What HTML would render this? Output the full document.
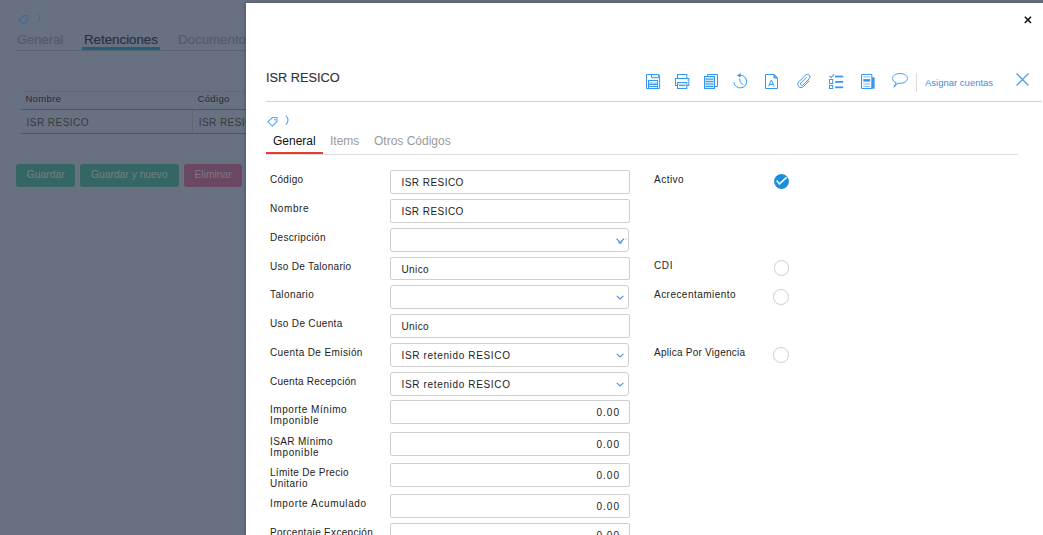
<!DOCTYPE html>
<html><head><meta charset="utf-8">
<style>
html,body{margin:0;padding:0;width:1043px;height:535px;overflow:hidden;background:#687182;font-family:"Liberation Sans",sans-serif;}
.t{position:absolute;white-space:nowrap;line-height:1;}
.bg{position:absolute;left:0;top:0;width:1043px;height:535px;background:#687182;}
#panel{position:absolute;left:246px;top:3px;width:797px;height:532px;background:#fff;box-shadow:0 0 4px rgba(40,48,62,0.55);}
.lbl{font-size:10px;color:#222;}
.inp{position:absolute;left:390px;width:238px;height:22px;border:1px solid #cfcfcf;border-radius:2px;background:#fff;}
.val{font-size:10px;color:#222;}
.rad{position:absolute;width:13.5px;height:13.5px;border:1px solid #cdcdcd;border-radius:50%;background:#fff;}
svg{position:absolute;overflow:visible;}
</style></head><body>
<div class="bg"></div>

<!-- background page (dimmed) -->
<svg style="left:18px;top:14px" width="12" height="11" viewBox="0 0 12 11"><path d="M0.9 5.9 L5.5 1.5 L9.9 1.5 L9.9 5.5 L5.3 10.2 Z" fill="none" stroke="#3f6a98" stroke-width="1.1" stroke-linejoin="round"/><rect x="7" y="2.9" width="1.6" height="1.6" fill="#3f6a98"/></svg>
<svg style="left:36.5px;top:12.8px" width="6" height="11" viewBox="0 0 6 11"><path d="M0.8 0.6 Q4.6 4.7 0.8 9.4" fill="none" stroke="#3f6a98" stroke-width="1"/></svg>
<div class="t" style="left:17px;top:33px;font-size:13px;color:#545b69;-webkit-text-stroke:0.2px #545b69">General</div>
<div class="t" style="left:84px;top:33px;font-size:13.3px;color:#2a303d;-webkit-text-stroke:0.2px #2a303d">Retenciones</div>
<div class="t" style="left:178px;top:33px;font-size:13.3px;color:#545b69;-webkit-text-stroke:0.2px #545b69">Documentos</div>
<div style="position:absolute;left:16px;top:50px;width:230px;height:1px;background:#5b6272"></div>
<div style="position:absolute;left:82px;top:47px;width:78px;height:3px;background:#245e78"></div>

<div style="position:absolute;left:21px;top:91px;width:225px;height:1px;background:#626a7a"></div>
<div class="t" style="left:25.4px;top:94.3px;font-size:9.5px;letter-spacing:0.35px;color:#272c38">Nombre</div>
<div class="t" style="left:197.5px;top:94.3px;font-size:9.5px;letter-spacing:0.35px;color:#272c38">Código</div>
<div style="position:absolute;left:21px;top:109px;width:225px;height:1px;background:#4d5565"></div>
<div class="t" style="left:26.6px;top:118.3px;font-size:10px;color:#333c3b;letter-spacing:0.45px">ISR RESICO</div>
<div class="t" style="left:198.7px;top:118.3px;font-size:10px;color:#333c3b;letter-spacing:0.45px">ISR RESICO</div>
<div style="position:absolute;left:192px;top:110px;width:1px;height:23px;background:#5f6777"></div>
<div style="position:absolute;left:21px;top:133px;width:225px;height:1px;background:#4d5565"></div>

<div style="position:absolute;left:16px;top:164px;width:59px;height:23px;background:#336664;border-radius:3px"></div>
<div class="t" style="left:26.8px;top:169.8px;font-size:10.3px;color:#748088">Guardar</div>
<div style="position:absolute;left:80px;top:164px;width:99px;height:23px;background:#336664;border-radius:3px"></div>
<div class="t" style="left:91px;top:169.8px;font-size:10.3px;color:#748088">Guardar y nuevo</div>
<div style="position:absolute;left:184px;top:164px;width:58px;height:23px;background:#6a4862;border-radius:3px"></div>
<div class="t" style="left:194.5px;top:169.8px;font-size:10.3px;color:#7d7588">Eliminar</div>

<!-- panel -->
<div id="panel"></div>

<!-- top close -->
<svg style="left:1024px;top:16px" width="8" height="8" viewBox="0 0 8 8"><path d="M0.8 0.8 L7 7 M7 0.8 L0.8 7" stroke="#111" stroke-width="1.55"/></svg>

<!-- title -->
<div class="t" style="left:266px;top:72.4px;font-size:12.75px;color:#2f333b;-webkit-text-stroke:0.15px #2f333b">ISR RESICO</div>
<div style="position:absolute;left:266px;top:101px;width:776px;height:1px;background:#cfd1d6"></div>

<!-- toolbar icons -->
<div id="icons">
<svg style="left:646px;top:74px" width="15" height="15" viewBox="0 0 15 15" fill="none" stroke="#3597f2" stroke-width="1">
<path d="M0.5 0.5 H12.6 L13.6 1.5 V14.5 H0.5 Z"/>
<path d="M5.5 0.5 V3.7 H12.5 V0.5"/>
<rect x="7" y="1.3" width="3.6" height="1.6" fill="#cfe6fb" stroke="none"/>
<rect x="2.5" y="6.5" width="9.1" height="8" fill="#fff"/>
<rect x="3" y="8.2" width="8.1" height="2.2" fill="#a9d2f8" stroke="none"/>
<path d="M3 10.5 H11 M3 12.5 H11"/>
</svg>
<svg style="left:675px;top:74px" width="15" height="15" viewBox="0 0 15 15" fill="none" stroke="#3597f2" stroke-width="1">
<rect x="2.5" y="0.5" width="9.3" height="4"/>
<rect x="0.5" y="4.5" width="13.3" height="7" fill="#fff"/>
<rect x="2.5" y="8.5" width="9.3" height="6" fill="#fff"/>
<rect x="3" y="9.6" width="8.3" height="1.6" fill="#b9dafa" stroke="none"/>
<path d="M4 11.6 H10.5"/>
<rect x="12" y="5.6" width="1" height="1" fill="#b9dafa" stroke="none"/>
</svg>
<svg style="left:704px;top:74px" width="15" height="15" viewBox="0 0 15 15" fill="none" stroke="#3597f2" stroke-width="1">
<path d="M3.5 2.5 V0.5 H13.5 V12.5 H10.5"/>
<rect x="0.5" y="2.5" width="10" height="12" fill="#cfe6fb"/>
<path d="M1.5 5.2 H9.5 M1.5 7.6 H9.5 M1.5 10 H9.5 M1.5 12.5 H9.5" stroke="#3597f2"/>
</svg>
<svg style="left:733px;top:73px" width="15" height="16" viewBox="0 0 15 16" fill="none" stroke="#3597f2" stroke-width="1">
<path d="M7.3 2.1 A6.4 6.4 0 1 1 0.9 9.3"/>
<path d="M3.9 2.6 L7.6 0 L7.6 4.6 Z" fill="#3597f2" stroke="none"/>
<path d="M6.5 5.6 Q6.2 8.6 9.8 11.6"/>
</svg>
<svg style="left:765px;top:74px" width="14" height="15" viewBox="0 0 14 15" fill="none" stroke="#3597f2" stroke-width="1">
<path d="M0.5 0.5 H9.2 L12.5 3.8 V14.5 H0.5 Z"/>
<path d="M8.9 0.9 V4 H12.1 Z" fill="#7dbdf6" stroke-width="0.9"/>
<path d="M3.7 12.4 L6.4 5.9 L9.1 12.4 M4.6 10.4 H8.2"/>
</svg>
<svg style="left:797px;top:74px" width="15" height="15" viewBox="0 0 15 15" fill="none" stroke="#3597f2" stroke-width="1">
<path d="M12.3 6.6 L6.4 12.6 C5.1 13.9 3 13.9 1.7 12.6 C0.4 11.3 0.4 9.2 1.7 7.9 L8.5 1.1 C9.5 0.1 11.2 0.1 12.2 1.1 C13.2 2.1 13.2 3.8 12.2 4.8 L5.9 11.1 C5.3 11.7 4.4 11.7 3.8 11.1 C3.2 10.5 3.2 9.6 3.8 9 L9.3 3.5"/>
</svg>
<svg style="left:829px;top:74px" width="15" height="15" viewBox="0 0 15 15" fill="none" stroke="#3597f2" stroke-width="1">
<path d="M0.4 2.2 L2.1 3.6 L5.1 0.4" stroke-width="1.1"/>
<rect x="0.5" y="5.5" width="3.2" height="4"/>
<rect x="0.5" y="11.5" width="3.2" height="3"/>
<rect x="6.1" y="1.6" width="8.1" height="1.8" fill="#3597f2" stroke="none"/>
<rect x="6.1" y="7" width="8.1" height="1.8" fill="#3597f2" stroke="none"/>
<rect x="6.1" y="12.4" width="8.1" height="1.8" fill="#3597f2" stroke="none"/>
</svg>
<svg style="left:861px;top:74px" width="14" height="15" viewBox="0 0 14 15" fill="none" stroke="#3597f2" stroke-width="1.1">
<rect x="10.6" y="3.3" width="3" height="11.4" fill="#3597f2" stroke="none"/>
<rect x="0.55" y="0.55" width="10.3" height="13.9" rx="0.8" fill="#fff"/>
<rect x="2.3" y="2.3" width="6.8" height="1" fill="#7fbdf5" stroke="none"/>
<rect x="2.3" y="5.1" width="6.8" height="2.5" fill="#3597f2" stroke="none"/>
<rect x="2.3" y="8.9" width="6.8" height="2" fill="#b5d9fa" stroke="none"/>
<rect x="2.3" y="12" width="6.8" height="0.9" fill="#7fbdf5" stroke="none"/>
</svg>
<svg style="left:892px;top:73px" width="17" height="15" viewBox="0 0 17 15" fill="none" stroke="#3d9cf0" stroke-width="1">
<path d="M4.2 9.6 C1.8 8.7 0.5 7.2 0.5 5.4 C0.5 2.7 3.8 0.5 8 0.5 C12.2 0.5 15.5 2.7 15.5 5.4 C15.5 8.1 12.2 10.3 8 10.3 C7.3 10.3 6.7 10.3 6.1 10.2 L1.8 14.2 Z"/>
</svg>
</div><!--/icons-->
<div style="position:absolute;left:916px;top:73px;width:1px;height:19px;background:#dcdcdc"></div>
<div class="t" style="left:925px;top:78px;font-size:9.5px;color:#3b8ee8">Asignar cuentas</div>
<svg style="left:1016px;top:73px" width="13" height="13" viewBox="0 0 13 13"><path d="M0.5 0.5 L12.5 12.5 M12.5 0.5 L0.5 12.5" stroke="#3d98ef" stroke-width="1.1"/></svg>

<!-- modal tag + chevron -->
<svg style="left:267px;top:116px" width="12" height="11" viewBox="0 0 12 11"><path d="M0.9 5.9 L5.5 1.5 L9.9 1.5 L9.9 5.5 L5.3 10.2 Z" fill="none" stroke="#5aacf5" stroke-width="1.1" stroke-linejoin="round"/><rect x="7" y="2.9" width="1.6" height="1.6" fill="#5aacf5"/></svg>
<svg style="left:285px;top:115px" width="6" height="11" viewBox="0 0 6 11"><path d="M0.8 0.6 Q5.2 4.9 0.8 9.6" fill="none" stroke="#5aacf5" stroke-width="1.1"/></svg>

<!-- tabs -->
<div class="t" style="left:273px;top:134.6px;font-size:12px;color:#111">General</div>
<div class="t" style="left:330px;top:134.6px;font-size:12px;color:#9a9a9a">Items</div>
<div class="t" style="left:374px;top:134.6px;font-size:12px;color:#9a9a9a">Otros Códigos</div>
<div style="position:absolute;left:266px;top:154px;width:752px;height:1px;background:#dcdcdc"></div>
<div style="position:absolute;left:266px;top:152px;width:57px;height:2px;background:#e43f2c"></div>

<!-- form -->
<div id="form">
<div class="t lbl" style="left:270px;top:174.5px;letter-spacing:0.28px">Código</div>
<div class="inp" style="top:170px;height:22px;width:238px;"></div>
<div class="t val" style="left:401.5px;top:178.2px;letter-spacing:0.45px">ISR RESICO</div>
<div class="t lbl" style="left:270px;top:203.5px;letter-spacing:0.6px">Nombre</div>
<div class="inp" style="top:199px;height:22px;width:238px;"></div>
<div class="t val" style="left:401.5px;top:207.2px;letter-spacing:0.45px">ISR RESICO</div>
<div class="t lbl" style="left:270px;top:232.5px;letter-spacing:0.32px">Descripción</div>
<div class="inp" style="top:228px;height:22px;width:237px;border-radius:3px;"></div>
<svg style="left:616px;top:238px" width="11" height="7" viewBox="0 0 11 7"><path d="M0.6 0.6 L4.2 4.6 L8 0.6" fill="none" stroke="#4e86c8" stroke-width="1.2"/><path d="M2.2 4.6 L4.2 5.8 L6.2 4.6" fill="none" stroke="#7aa3d6" stroke-width="0.9"/><path d="M10 0.5 L10 2" stroke="#9bbbe0" stroke-width="0.8"/></svg>
<div class="t lbl" style="left:270px;top:261.5px;letter-spacing:0.31px">Uso De Talonario</div>
<div class="inp" style="top:257px;height:21px;width:238px;"></div>
<div class="t val" style="left:401.5px;top:265.2px;letter-spacing:0.4px">Unico</div>
<div class="t lbl" style="left:270px;top:289.5px;letter-spacing:0.4px">Talonario</div>
<div class="inp" style="top:285px;height:22px;width:237px;border-radius:3px;"></div>
<svg style="left:616px;top:295.3px" width="9" height="6" viewBox="0 0 9 6"><path d="M0.8 0.8 L4.1 4 L7.5 0.8" fill="none" stroke="#5a90d2" stroke-width="1.15"/></svg>
<div class="t lbl" style="left:270px;top:318.5px;letter-spacing:0.32px">Uso De Cuenta</div>
<div class="inp" style="top:314px;height:22px;width:238px;"></div>
<div class="t val" style="left:401.5px;top:322.2px;letter-spacing:0.4px">Unico</div>
<div class="t lbl" style="left:270px;top:347.5px;letter-spacing:0.39px">Cuenta De Emisión</div>
<div class="inp" style="top:343px;height:22px;width:237px;border-radius:3px;"></div>
<div class="t val" style="left:401.5px;top:351.2px;letter-spacing:0.65px">ISR retenido RESICO</div>
<svg style="left:616px;top:353.3px" width="9" height="6" viewBox="0 0 9 6"><path d="M0.8 0.8 L4.1 4 L7.5 0.8" fill="none" stroke="#5a90d2" stroke-width="1.15"/></svg>
<div class="t lbl" style="left:270px;top:376.5px;letter-spacing:0.25px">Cuenta Recepción</div>
<div class="inp" style="top:372px;height:22px;width:237px;border-radius:3px;"></div>
<div class="t val" style="left:401.5px;top:380.2px;letter-spacing:0.65px">ISR retenido RESICO</div>
<svg style="left:616px;top:382.3px" width="9" height="6" viewBox="0 0 9 6"><path d="M0.8 0.8 L4.1 4 L7.5 0.8" fill="none" stroke="#5a90d2" stroke-width="1.15"/></svg>
<div class="t lbl" style="left:270px;top:404.5px;letter-spacing:0.55px">Importe Mínimo</div>
<div class="t lbl" style="left:270px;top:416.1px;letter-spacing:0.66px">Imponible</div>
<div class="inp" style="top:400px;height:22px;width:238px;"></div>
<div class="t val" style="right:423.0px;top:408.2px;letter-spacing:1.0px">0.00</div>
<div class="t lbl" style="left:270px;top:436.5px;letter-spacing:0.36px">ISAR Mínimo</div>
<div class="t lbl" style="left:270px;top:448.1px;letter-spacing:0.66px">Imponible</div>
<div class="inp" style="top:432px;height:22px;width:238px;"></div>
<div class="t val" style="right:423.0px;top:440.2px;letter-spacing:1.0px">0.00</div>
<div class="t lbl" style="left:270px;top:467.5px;letter-spacing:0.31px">Límite De Precio</div>
<div class="t lbl" style="left:270px;top:479.1px;letter-spacing:0.43px">Unitario</div>
<div class="inp" style="top:463px;height:22px;width:238px;"></div>
<div class="t val" style="right:423.0px;top:471.2px;letter-spacing:1.0px">0.00</div>
<div class="t lbl" style="left:270px;top:498.5px;letter-spacing:0.62px">Importe Acumulado</div>
<div class="inp" style="top:494px;height:22px;width:238px;"></div>
<div class="t val" style="right:423.0px;top:502.2px;letter-spacing:1.0px">0.00</div>
<div class="t lbl" style="left:270px;top:527.5px;letter-spacing:0.32px">Porcentaje Excepción</div>
<div class="inp" style="top:523px;height:22px;width:238px;"></div>
<div class="t val" style="right:423.0px;top:531.2px;letter-spacing:1.0px">0.00</div>
<div class="t lbl" style="left:654px;top:174.5px;letter-spacing:0.48px">Activo</div>
<svg style="left:774.4px;top:174.3px" width="15" height="15" viewBox="0 0 15 15"><circle cx="7.5" cy="7.5" r="7.4" fill="#1a8edc"/><path d="M2.6 6.6 L5.6 9.9 L12.6 3.4" fill="none" stroke="#fff" stroke-width="1.5"/></svg>
<div class="t lbl" style="left:654px;top:260.7px;letter-spacing:0.6px">CDI</div>
<div class="rad" style="left:773.75px;top:260.25px"></div>
<div class="t lbl" style="left:654px;top:290.0px;letter-spacing:0.46px">Acrecentamiento</div>
<div class="rad" style="left:773.25px;top:289.25px"></div>
<div class="t lbl" style="left:654px;top:348.1px;letter-spacing:0.25px">Aplica Por Vigencia</div>
<div class="rad" style="left:773.25px;top:347.05px"></div>
</div><!--/form-->

</body></html>
